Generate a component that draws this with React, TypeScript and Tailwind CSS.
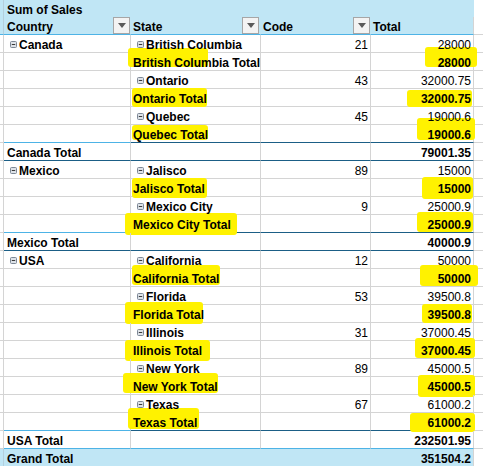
import React from 'react';

type Line = 'gray' | 'split' | 'dark' | 'light';

type Row = {
  country?: string;
  state?: string;
  stateTotal?: string;
  countryTotal?: string;
  code?: string;
  total: string;
  bold?: boolean;
  line?: Line;
  hlB?: string;
  hlD?: string;
};

const rows: Row[] = [
  { country: 'Canada', state: 'British Columbia', code: '21', total: '28000' },
  { stateTotal: 'British Columbia Total', total: '28000', bold: true, hlB: 'left-[-3px] top-[-5px] w-[80px] h-[19px]', hlD: 'left-[54px] top-[-6px] w-[52px] h-[20px]' },
  { state: 'Ontario', code: '43', total: '32000.75' },
  { stateTotal: 'Ontario Total', total: '32000.75', bold: true, hlB: 'left-[1px] top-[-1px] w-[75px] h-[19px]', hlD: 'left-[36px] top-[1px] w-[65px] h-[17px]' },
  { state: 'Quebec', code: '45', total: '19000.6' },
  { stateTotal: 'Quebec Total', total: '19000.6', bold: true, line: 'split', hlB: 'left-[1px] top-[0px] w-[76px] h-[15px]', hlD: 'left-[46px] top-[-7px] w-[58px] h-[22px]' },
  { countryTotal: 'Canada Total', total: '79001.35', bold: true, line: 'dark' },
  { country: 'Mexico', state: 'Jalisco', code: '89', total: '15000' },
  { stateTotal: 'Jalisco Total', total: '15000', bold: true, hlB: 'left-[1px] top-[-1px] w-[75px] h-[20px]', hlD: 'left-[51px] top-[-2px] w-[51px] h-[22px]' },
  { state: 'Mexico City', code: '9', total: '25000.9' },
  { stateTotal: 'Mexico City Total', total: '25000.9', bold: true, line: 'split', hlB: 'left-[-6px] top-[-2px] w-[112px] h-[22px]', hlD: 'left-[46px] top-[-3px] w-[56px] h-[20px]' },
  { countryTotal: 'Mexico Total', total: '40000.9', bold: true, line: 'dark' },
  { country: 'USA', state: 'California', code: '12', total: '50000' },
  { stateTotal: 'California Total', total: '50000', bold: true, hlB: 'left-[1px] top-[-4px] w-[88px] h-[20px]', hlD: 'left-[49px] top-[-4px] w-[58px] h-[21px]' },
  { state: 'Florida', code: '53', total: '39500.8' },
  { stateTotal: 'Florida Total', total: '39500.8', bold: true, hlB: 'left-[-6px] top-[-3px] w-[78px] h-[22px]', hlD: 'left-[51px] top-[-1px] w-[50px] h-[19px]' },
  { state: 'Illinois', code: '31', total: '37000.45' },
  { stateTotal: 'Illinois Total', total: '37000.45', bold: true, hlB: 'left-[-6px] top-[-1px] w-[85px] h-[21px]', hlD: 'left-[44px] top-[-3px] w-[60px] h-[20px]' },
  { state: 'New York', code: '89', total: '45000.5' },
  { stateTotal: 'New York Total', total: '45000.5', bold: true, hlB: 'left-[-8px] top-[-4px] w-[95px] h-[20px]', hlD: 'left-[47px] top-[-2px] w-[57px] h-[22px]' },
  { state: 'Texas', code: '67', total: '61000.2' },
  { stateTotal: 'Texas Total', total: '61000.2', bold: true, line: 'split', hlB: 'left-[-3px] top-[-5px] w-[71px] h-[21px]', hlD: 'left-[39px] top-[0px] w-[65px] h-[19px]' },
  { countryTotal: 'USA Total', total: '232501.95', bold: true, line: 'light' },
];

const aLine: Record<Line, string> = {
  gray: 'border-b-[#d4d4d4]',
  split: 'border-b-[#4db3e6]',
  dark: 'border-b-[#1b5e86]',
  light: 'border-b-[#4db3e6]',
};

const restLine: Record<Line, string> = {
  gray: 'border-b-[#d4d4d4]',
  split: 'border-b-[#1b5e86]',
  dark: 'border-b-[#1b5e86]',
  light: 'border-b-[#4db3e6]',
};

const Minus = () => (
  <svg width="7" height="7" viewBox="0 0 7 7" className="shrink-0">
    <rect x="0.5" y="0.5" width="6" height="6" rx="1" fill="#dde2e8" stroke="#7d8896" />
    <line x1="1.8" y1="3.5" x2="5.2" y2="3.5" stroke="#3a3a3a" strokeWidth="1" />
  </svg>
);

const Drop = () => (
  <div className="w-[17px] h-[17px] border border-[#a6a6a6] bg-[#f3f3f3] flex items-center justify-center shrink-0">
    <svg width="8" height="5" viewBox="0 0 8 5">
      <polygon points="0,0 8,0 4,5" fill="#5a5a5a" />
    </svg>
  </div>
);

// highlighter marks sit under every text (text is z-10)
const Hl = ({ pos }: { pos?: string }) =>
  pos ? <div className={`absolute bg-[#fff200] rounded-[3px] ${pos}`} /> : null;

const cell = 'relative flex items-center pt-[2px] border-r border-r-[#d4d4d4] border-b';

const DataRow = ({ r }: { r: Row }) => {
  const line = r.line ?? 'gray';
  return (
    <div className="flex h-[18px]">
      <div className="w-[4px] shrink-0 border-r border-r-[#d4d4d4] border-b border-b-[#d4d4d4]" />
      <div className={`${cell} w-[127px] shrink-0 pl-[3px] ${aLine[line]}`}>
        {r.country && (
          <div className="relative z-10 flex items-center gap-[2px] pl-[3px]">
            <Minus />
            <span className="font-bold leading-[14px]">{r.country}</span>
          </div>
        )}
        {r.countryTotal && <span className="relative z-10 font-bold leading-[14px]">{r.countryTotal}</span>}
      </div>
      <div className={`${cell} w-[130px] shrink-0 pl-[2px] ${restLine[line]}`}>
        <Hl pos={r.hlB} />
        {r.state && (
          <div className="relative z-10 flex items-center gap-[2px] pl-[4px]">
            <Minus />
            <span className="font-bold leading-[14px]">{r.state}</span>
          </div>
        )}
        {r.stateTotal && <span className="relative z-10 font-bold leading-[14px] whitespace-nowrap">{r.stateTotal}</span>}
      </div>
      <div className={`${cell} w-[110px] shrink-0 justify-end pr-[2px] ${restLine[line]}`}>
        <span className="relative z-10 leading-[14px]">{r.code}</span>
      </div>
      <div className={`${cell} w-[103px] shrink-0 justify-end pr-[2px] ${restLine[line]}`}>
        <Hl pos={r.hlD} />
        <span className={`relative z-10 leading-[14px] ${r.bold ? 'font-bold' : ''}`}>{r.total}</span>
      </div>
      <div className="flex-1 border-b border-b-[#d4d4d4]" />
    </div>
  );
};

export default function App() {
  return (
    <div className="w-[483px] h-[466px] overflow-hidden bg-white text-black text-[12px] font-['Liberation_Sans',Arial,sans-serif]">
      {/* title row */}
      <div className="flex h-[17px]">
        <div className="w-[4px] shrink-0 bg-[#c0e6f5] border-r border-r-[#b4cfdc]" />
        <div className="w-[470px] shrink-0 bg-[#c0e6f5] flex items-center pt-[2px] pl-[3px]">
          <span className="font-bold leading-[14px]">Sum of Sales</span>
        </div>
        <div className="flex-1" />
      </div>
      {/* field header row */}
      <div className="flex h-[18px]">
        <div className="w-[4px] shrink-0 bg-[#c0e6f5] border-r border-r-[#b4cfdc] border-b border-b-[#4db3e6]" />
        <div className="w-[127px] shrink-0 bg-[#c0e6f5] border-r border-r-[#c0e6f5] border-b border-b-[#4db3e6] flex items-center justify-between pl-[3px]">
          <span className="font-bold leading-[14px] pt-[2px]">Country</span>
          <Drop />
        </div>
        <div className="w-[130px] shrink-0 bg-[#c0e6f5] border-r border-r-[#c0e6f5] border-b border-b-[#4db3e6] flex items-center justify-between pl-[2px] pr-[1px]">
          <span className="font-bold leading-[14px] pt-[2px]">State</span>
          <Drop />
        </div>
        <div className="w-[110px] shrink-0 bg-[#c0e6f5] border-r border-r-[#c0e6f5] border-b border-b-[#4db3e6] flex items-center justify-between pl-[2px]">
          <span className="font-bold leading-[14px] pt-[2px]">Code</span>
          <Drop />
        </div>
        <div className="w-[103px] shrink-0 bg-[#c0e6f5] border-r border-r-[#d4d4d4] border-b border-b-[#4db3e6] flex items-center pl-[2px]">
          <span className="font-bold leading-[14px] pt-[2px]">Total</span>
        </div>
        <div className="flex-1 border-b border-b-[#d4d4d4]" />
      </div>
      {rows.map((r, i) => (
        <DataRow key={i} r={r} />
      ))}
      {/* grand total */}
      <div className="flex h-[18px]">
        <div className="w-[4px] shrink-0 bg-[#c0e6f5] border-r border-r-[#b4cfdc]" />
        <div className="w-[127px] shrink-0 bg-[#c0e6f5] flex items-center pt-[2px] pl-[3px] border-r border-r-[#c0e6f5]">
          <span className="font-bold leading-[14px]">Grand Total</span>
        </div>
        <div className="w-[240px] shrink-0 bg-[#c0e6f5]" />
        <div className="w-[103px] shrink-0 bg-[#c0e6f5] flex items-center justify-end pt-[2px] pr-[2px] border-r border-r-[#d4d4d4]">
          <span className="font-bold leading-[14px]">351504.2</span>
        </div>
        <div className="flex-1" />
      </div>
    </div>
  );
}
